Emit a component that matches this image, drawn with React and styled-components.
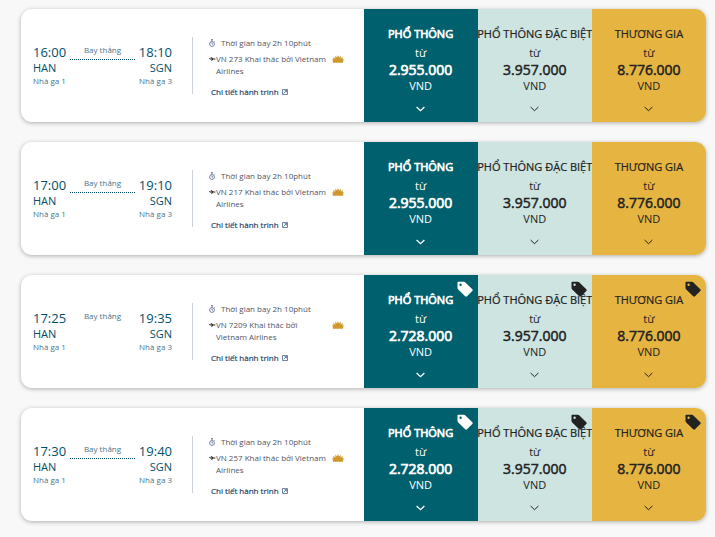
import React from 'react'
import styled, { createGlobalStyle } from 'styled-components'

const GlobalStyle = createGlobalStyle`
  * {
    box-sizing: border-box;
  }

  body {
    margin: 0;
    background: #f8f8f8;
    font-family: 'Open Sans', 'Noto Sans', sans-serif;
    color: #00506b;
  }
`

const FlightList = styled.main`
  display: flex;
  flex-direction: column;
  gap: 20px;
  padding: 9px 9px 15px 21px;
`

const FlightCard = styled.article`
  display: grid;
  grid-template-columns: minmax(0, 1fr) minmax(0, 1fr);
  min-height: 113px;
  border-radius: 11px;
  overflow: hidden;
  background: #fff;
  box-shadow: 0 1px 4px rgba(0, 0, 0, 0.3);
`

const FlightInfo = styled.div`
  display: flex;
  align-items: center;
  padding-left: 12px;
`

const Route = styled.div`
  display: flex;
  width: 139px;
`

const Stop = styled.div`
  display: flex;
  flex-direction: column;
  text-align: ${props => props.$end ? 'right' : 'left'};
`

const Time = styled.time`
  font-size: 13px;
  line-height: 17px;
`

const Airport = styled.span`
  font-size: 11px;
  line-height: 14px;
`

const Terminal = styled.span`
  font-size: 8px;
  line-height: 12px;
  color: #4d7286;
`

const Leg = styled.div`
  flex: 1;
  margin: 0 4px;
  text-align: center;
  font-size: 8px;
  line-height: 12px;
  color: #4d7286;
`

const LegLine = styled.div`
  margin-top: 3px;
  border-top: 1px dotted #00506b;
`

const Divider = styled.div`
  width: 1px;
  height: 57px;
  margin: 0 16px 0 20px;
  background: #ccd2dc;
`

const Details = styled.div`
  flex: 1;
  padding-top: 4px;
  font-size: 8px;
  line-height: 12px;
  color: #50555f;
`

const Duration = styled.div`
  display: flex;
  align-items: center;
  gap: 6px;
  margin-bottom: 4px;
`

const Carrier = styled.div`
  display: flex;
  align-items: flex-start;

  svg {
    flex: none;
    margin-top: 2px;
  }
`

const CarrierName = styled.span`
  width: 112px;
  margin-right: 4px;
`

const DetailsLink = styled.a`
  display: inline-flex;
  align-items: center;
  gap: 3px;
  margin: 9px 0 0 2px;
  color: #24466b;
  -webkit-text-stroke: 0.2px;
  text-decoration: none;
`

const Fares = styled.div`
  display: grid;
  grid-template-columns: repeat(3, minmax(0, 1fr));
`

const FareButton = styled.button`
  position: relative;
  display: flex;
  flex-direction: column;
  align-items: center;
  padding: 17px 0 0;
  border: 0;
  font-family: inherit;
  font-size: 11px;
  line-height: 16px;
  white-space: nowrap;
  color: ${props => props.$color};
  background: ${props => props.$background};
  cursor: pointer;
`

const FareName = styled.span`
  margin-bottom: 3px;
  -webkit-text-stroke: ${props => props.$strong ? '0.7px' : '0.2px'};
`

const Price = styled.span`
  font-size: 14px;
  line-height: 17px;
  -webkit-text-stroke: ${props => props.$strong ? '0.7px' : '0.5px'};
`

const Chevron = styled.svg`
  margin-top: 11px;
`

const DealTag = styled.svg`
  position: absolute;
  top: 6px;
  right: 5px;
`

const cabins = [
  { name: 'PHỔ THÔNG', color: '#fff', background: '#00606d', strong: true },
  { name: 'PHỔ THÔNG ĐẶC BIỆT', color: '#222', background: '#cde4e0' },
  { name: 'THƯƠNG GIA', color: '#222', background: '#e5b441' },
]

const flights = [
  { depart: '16:00', arrive: '18:10', number: 'VN 273', prices: ['2.955.000', '3.957.000', '8.776.000'], line: true },
  { depart: '17:00', arrive: '19:10', number: 'VN 217', prices: ['2.955.000', '3.957.000', '8.776.000'], line: true },
  { depart: '17:25', arrive: '19:35', number: 'VN 7209', prices: ['2.728.000', '3.957.000', '8.776.000'], deal: true },
  { depart: '17:30', arrive: '19:40', number: 'VN 257', prices: ['2.728.000', '3.957.000', '8.776.000'], line: true, deal: true },
]

const ClockIcon = () => (
  <svg width="6" height="8" viewBox="0 0 6 8" fill="none" stroke="#50658a" strokeWidth="0.8" aria-hidden="true">
    <circle cx="3" cy="5" r="2.4" />
    <path d="M2 .7h2M3 .7v1.8M3 3.7V5l.8.4M5 2l.6.6" />
  </svg>
)

const PlaneIcon = () => (
  <svg width="7" height="8" viewBox="0 0 7 8" fill="#333" aria-hidden="true">
    <path d="M0 3l.6-.1.8.7h1.3L1.5 2h.8l2.3 1.5h1.3q.8.1.8.5t-.8.5H4.3L2.8 6h-.7l.7-1.6H1.1Q.4 4.2 0 3z" />
  </svg>
)

const ExternalIcon = () => (
  <svg width="6" height="6" viewBox="0 0 6 6" fill="none" stroke="#50658a" strokeWidth="0.8" aria-hidden="true">
    <path d="M3.4.5H.5v5h5V.5H3.4M1.6 4.4L4.6 1.4M2.6 1.6h1.8v1.8" />
  </svg>
)

const LotusIcon = () => (
  <svg width="12" height="8" viewBox="0 0 12 8" fill="#cf982a" aria-hidden="true">
    <path d="M6 0l1 2.6L8.8.4l-.2 3 2.6-1.7-1 2.6 1.8-.1-1.2 2 .9.4-.9 1.2H1.2L.3 6.6l.9-.4L0 4.2l1.8.1-1-2.6 2.6 1.7-.2-3L5 2.6z" />
  </svg>
)

const TagIcon = () => (
  <DealTag width="16" height="16" viewBox="0 0 16 16" fill="currentColor" fillRule="evenodd" aria-hidden="true">
    <path d="M1.5.8h5.3c.7 0 1.1.2 1.6.7l6.9 6.8c.6.6.6 1.2 0 1.8L10 15.3c-.6.6-1.2.6-1.8 0L1.2 8.5C.7 8 .5 7.5.5 6.8v-5c0-.6.4-1 1-1zM3.6 2.5a1.2 1.2 0 1 0 0 2.4 1.2 1.2 0 0 0 0-2.4z" />
  </DealTag>
)

const Fare = ({ cabin, price, deal }) => (
  <FareButton type="button" $color={cabin.color} $background={cabin.background}>
    <FareName $strong={cabin.strong}>{cabin.name}</FareName>
    <span>từ</span>
    <Price $strong={cabin.strong}>{price}</Price>
    <span>VND</span>
    <Chevron width="9" height="8" viewBox="0 0 9 8" fill="none" stroke="currentColor" strokeWidth={cabin.strong ? 1.3 : 1} aria-hidden="true">
      <path d="M.6 2l3.9 3.7L8.4 2" />
    </Chevron>
    {deal && <TagIcon />}
  </FareButton>
)

const Flight = ({ flight }) => (
  <FlightCard>
    <FlightInfo>
      <Route>
        <Stop>
          <Time>{flight.depart}</Time>
          <Airport>HAN</Airport>
          <Terminal>Nhà ga 1</Terminal>
        </Stop>
        <Leg>
          Bay thẳng
          {flight.line && <LegLine />}
        </Leg>
        <Stop $end>
          <Time>{flight.arrive}</Time>
          <Airport>SGN</Airport>
          <Terminal>Nhà ga 3</Terminal>
        </Stop>
      </Route>
      <Divider />
      <Details>
        <Duration>
          <ClockIcon />
          Thời gian bay 2h 10phút
        </Duration>
        <Carrier>
          <PlaneIcon />
          <CarrierName>{`${flight.number} Khai thác bởi Vietnam Airlines`}</CarrierName>
          <LotusIcon />
        </Carrier>
        <DetailsLink href="#">
          Chi tiết hành trình
          <ExternalIcon />
        </DetailsLink>
      </Details>
    </FlightInfo>
    <Fares>
      {cabins.map((cabin, i) => (
        <Fare key={cabin.name} cabin={cabin} price={flight.prices[i]} deal={flight.deal} />
      ))}
    </Fares>
  </FlightCard>
)

const App = () => (
  <>
    <GlobalStyle />
    <FlightList>
      {flights.map(flight => <Flight key={flight.depart} flight={flight} />)}
    </FlightList>
  </>
)

export default App
